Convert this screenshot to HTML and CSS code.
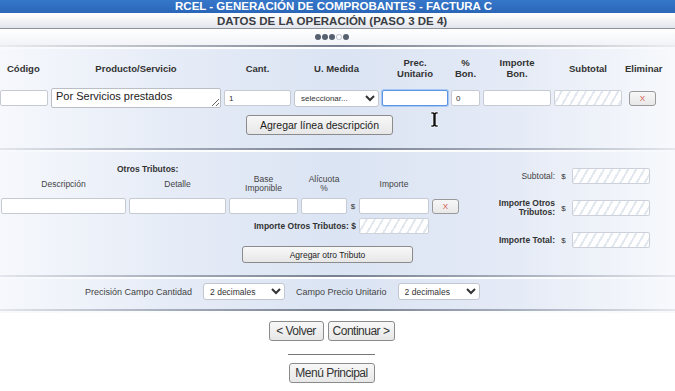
FILE: index.html
```html
<!DOCTYPE html>
<html lang="es">
<head>
 <meta charset="UTF-8">
 <title>RCEL - Generación de Comprobantes</title>
 <link rel="stylesheet" href="styles.css">
</head>
<body>
 <div class="titulo">RCEL - GENERACIÓN DE COMPROBANTES - FACTURA C</div>
 <div class="subtitulo">DATOS DE LA OPERACIÓN (PASO 3 DE 4)</div>
 <div class="pasos">
   <span class="dot"></span><span class="dot"></span><span class="dot"></span><span class="dot actual"></span><span class="dot"></span>
 </div>
 <div class="sep"></div>

 <div class="cuerpo">
   <!-- lineas de detalle -->
   <div class="items">
     <div class="th">Código</div>
     <div class="th">Producto/Servicio</div>
     <div class="th">Cant.</div>
     <div class="th">U. Medida</div>
     <div class="th">Prec.<br>Unitario</div>
     <div class="th">%<br>Bon.</div>
     <div class="th">Importe<br>Bon.</div>
     <div class="th">Subtotal</div>
     <div class="th">Eliminar</div>

     <input type="text" class="campo">
     <textarea class="detalle">Por Servicios prestados</textarea>
     <input type="text" class="campo" value="1">
     <select class="combo"><option>seleccionar...</option></select>
     <input type="text" class="campo foco">
     <input type="text" class="campo" value="0">
     <input type="text" class="campo">
     <input type="text" class="campo bloqueado" readonly>
     <button class="borrar">X</button>
   </div>
   <div class="fila-boton linea">
     <button class="btn">Agregar línea descripción</button>
     <svg class="cursor" width="9" height="17" viewBox="0 0 9 17">
       <path d="M1 1h3l0.5 1 0.5-1h3v2h-2v11h2v2h-3l-0.5-1-0.5 1h-3v-2h2v-11h-2z" fill="#111" stroke="#fff" stroke-width="0.6"/>
     </svg>
   </div>

   <div class="sep"></div>

   <!-- otros tributos y totales -->
   <div class="tributos">
     <div class="izq">
       <div class="otros-titulo">Otros Tributos:</div>
       <div class="grilla-trib">
         <div class="lbl">Descripción</div>
         <div class="lbl">Detalle</div>
         <div class="lbl">Base<br>Imponible</div>
         <div class="lbl">Alícuota<br>%</div>
         <div></div>
         <div class="lbl">Importe</div>
         <div></div>

         <input type="text" class="campo">
         <input type="text" class="campo">
         <input type="text" class="campo">
         <input type="text" class="campo">
         <div class="pesos">$</div>
         <input type="text" class="campo">
         <button class="borrar">X</button>

         <div class="total-otros">Importe Otros Tributos: $</div>
         <input type="text" class="campo bloqueado" readonly>
       </div>
       <div class="fila-boton tributo">
         <button class="btn chico">Agregar otro Tributo</button>
       </div>
     </div>

     <div class="totales">
       <div class="lbl-tot">Subtotal:</div>
       <div class="pesos">$</div>
       <input type="text" class="campo bloqueado" readonly>

       <div class="lbl-tot fuerte">Importe Otros<br>Tributos:</div>
       <div class="pesos">$</div>
       <input type="text" class="campo bloqueado" readonly>

       <div class="lbl-tot fuerte">Importe Total:</div>
       <div class="pesos">$</div>
       <input type="text" class="campo bloqueado" readonly>
     </div>
   </div>

   <div class="sep"></div>
   <div class="precision">
     <span>Precisión Campo Cantidad</span>
     <select class="combo dec"><option>2 decimales</option></select>
     <span>Campo Precio Unitario</span>
     <select class="combo dec"><option>2 decimales</option></select>
   </div>
   <div class="sep"></div>
 </div>

 <div class="navegacion">
   <div class="botones">
     <button class="btn nav volver">&lt; Volver</button>
     <button class="btn nav continuar">Continuar &gt;</button>
   </div>
   <div class="raya"></div>
   <button class="btn nav menu">Menú Principal</button>
 </div>
</body>
</html>
```

FILE: styles.css
```css
body {
margin: 0;
font-family: 'Liberation Sans', Arial, sans-serif;
color: #333;
background: #fff;
}
.titulo {
height: 13px;
line-height: 13px;
background: linear-gradient(#3677c9, #2a66b8);
color: #fff;
font-size: 11.5px;
font-weight: bold;
text-align: center;
padding-right: 8px;
border-bottom: 1px solid #fff;
}
.subtitulo {
height: 14px;
line-height: 14px;
background: linear-gradient(#ffffff, #e2e5eb);
border-bottom: 1px solid #8d939d;
font-size: 11.5px;
font-weight: bold;
color: #3a3d44;
text-align: center;
padding-right: 11px;
}
.pasos {
height: 16px;
display: flex;
justify-content: center;
align-items: center;
gap: 1px;
padding-right: 12px;
background: linear-gradient(#ffffff, #f1f3f7);
}
.dot {
width: 6px;
height: 6px;
border-radius: 50%;
background: #56606f;
}
.dot.actual {
background: #fff;
box-shadow: inset 0 0 0 1px #c3c8d0;
}
.sep {
height: 4px;
background:
  linear-gradient(90deg, rgba(120,130,145,0.15), #77808f 50%, rgba(120,130,145,0.15)) 0 0 / 100% 2px no-repeat,
  linear-gradient(90deg, #f7f9fc, #ffffff 50%, #f7f9fc) 0 2px / 100% 2px no-repeat;
}
.cuerpo {
background: linear-gradient(90deg, #f6f8fc 0%, #e6ecf7 25%, #dbe4f3 50%, #e4eaf6 75%, #f7f9fc 100%);
}
.items {
display: grid;
grid-template-columns: 48px 170px 67px 85px 66px 29px 68px 68px 35px;
grid-template-rows: 26px 20px;
column-gap: 3px;
row-gap: 7px;
padding-top: 6px;
align-items: center;
}
.th {
font-size: 9.5px;
font-weight: bold;
text-align: center;
line-height: 11px;
color: #333;
}
.items .th:first-child {
text-align: left;
padding-left: 7px;
}
.campo {
box-sizing: border-box;
height: 16px;
width: 100%;
margin: 0;
padding: 0 4px;
border: 1px solid #c6cbd3;
border-radius: 2px;
background: #fff;
font-family: 'Liberation Sans', Arial, sans-serif;
font-size: 8px;
color: #333;
}
.foco {
border-color: #5a95e6;
box-shadow: 0 0 0 1px #a9c8f2;
}
.bloqueado {
background: repeating-linear-gradient(120deg, #ffffff 0 5px, #e3e7ee 5px 7px);
border-color: #cdd2da;
}
.detalle {
box-sizing: border-box;
width: 100%;
height: 20px;
margin: 0;
padding: 1px 4px;
border: 1px solid #b9bec7;
border-radius: 2px;
font-family: 'Liberation Sans', Arial, sans-serif;
font-size: 11px;
color: #222;
resize: both;
overflow: hidden;
}
.combo {
box-sizing: border-box;
height: 17px;
width: 100%;
margin: 0;
padding: 0 2px;
border: 1px solid #c2c7cf;
border-radius: 3px;
background: #fff;
font-family: 'Liberation Sans', Arial, sans-serif;
font-size: 8px;
color: #333;
}
.borrar {
justify-self: center;
width: 27px;
height: 15px;
padding: 0;
border: 1px solid #9a9a9a;
border-radius: 3px;
background: linear-gradient(#f7f7f7, #e8e8e8);
color: #d9534f;
font-family: 'Liberation Sans', Arial, sans-serif;
font-size: 8px;
}
.fila-boton {
display: flex;
align-items: center;
}
.linea {
padding: 7px 0 13px 246px;
gap: 37px;
}
.btn {
box-sizing: border-box;
border: 1px solid #8b8b8b;
border-radius: 3px;
background: linear-gradient(#f8f8f8, #e7e7e7);
font-family: 'Liberation Sans', Arial, sans-serif;
color: #222;
padding: 0;
}
.linea .btn {
width: 147px;
height: 20px;
font-size: 10.5px;
}
.cursor {
margin-top: -12px;
}
.tributos {
display: flex;
height: 123px;
}
.izq {
width: 460px;
}
.otros-titulo {
font-size: 8.5px;
font-weight: bold;
padding: 12px 0 0 117px;
line-height: 10px;
}
.grilla-trib {
display: grid;
grid-template-columns: 125px 97px 69px 46px 6px 70px 27px;
grid-template-rows: 20px 16px 15px;
column-gap: 3px;
row-gap: 4px;
padding-left: 1px;
align-items: center;
}
.lbl {
font-size: 8.5px;
line-height: 9px;
text-align: center;
color: #444;
}
.pesos {
font-size: 8px;
text-align: center;
color: #333;
}
.total-otros {
grid-column: 1 / 6;
text-align: right;
font-size: 8.5px;
font-weight: bold;
}
.tributo {
padding: 13px 0 0 242px;
}
.chico {
width: 171px;
height: 17px;
font-size: 8.5px;
}
.totales {
margin-left: auto;
margin-right: 25px;
padding-top: 16px;
display: grid;
grid-template-columns: auto 7px 78px;
grid-auto-rows: 16px;
column-gap: 5px;
row-gap: 16px;
align-items: center;
align-content: start;
}
.lbl-tot {
font-size: 8.5px;
line-height: 9px;
text-align: right;
color: #444;
}
.lbl-tot.fuerte {
font-weight: bold;
color: #333;
}
.precision {
display: flex;
align-items: center;
gap: 11px;
height: 30px;
padding-left: 85px;
padding-bottom: 5px;
box-sizing: border-box;
font-size: 9px;
color: #444;
}
.dec {
width: 82px;
font-size: 8.5px;
}
.navegacion {
display: flex;
flex-direction: column;
align-items: center;
padding: 8px 12px 0 0;
}
.botones {
display: flex;
gap: 4px;
}
.nav {
height: 20px;
font-size: 12px;
letter-spacing: -0.5px;
white-space: nowrap;
padding: 0;
color: #333;
}
.volver {
width: 55px;
}
.continuar {
width: 67px;
}
.menu {
width: 86px;
}
.raya {
width: 87px;
height: 1px;
background: #777;
margin: 13px 0 8px;
}
```
